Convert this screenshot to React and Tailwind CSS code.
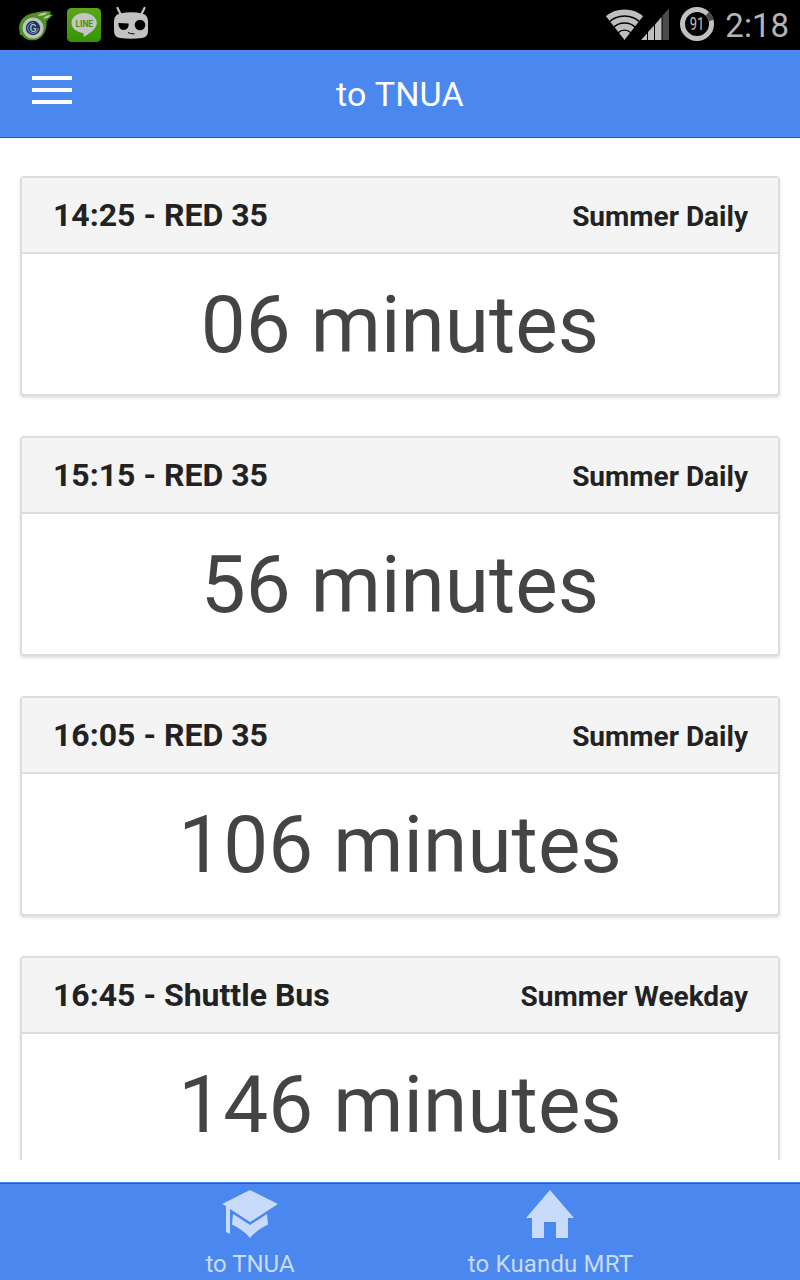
const departures = [
  { title: "14:25 - RED 35", schedule: "Summer Daily", wait: "06 minutes" },
  { title: "15:15 - RED 35", schedule: "Summer Daily", wait: "56 minutes" },
  { title: "16:05 - RED 35", schedule: "Summer Daily", wait: "106 minutes" },
  { title: "16:45 - Shuttle Bus", schedule: "Summer Weekday", wait: "146 minutes" },
];

function CometIcon() {
  return (
    <svg width="34" height="32" viewBox="0 0 34 32">
      <path d="M0 16C1 8 7 3 15 2C21 0 28 0 32 .500L31 3L34 4L29 8.500L27.500 10C28.500 19 24 27 17 29C10 30 5 28 3 24L1 24Z" fill="#4f8f25" />
      <path d="M18.500 4.500Q22 1.500 28.500 1.500Q25 5.500 18.500 4.500ZM24 7.500Q27 4 31.500 4Q29 8 24 7.500Z" fill="#c3c9bd" />
      <circle cx="14" cy="17" r="10.500" fill="#bfc4bf" />
      <circle cx="14" cy="17" r="7.200" fill="#17365a" />
      <circle cx="14" cy="17" r="5.300" fill="none" stroke="#aeb8be" strokeWidth=".8" strokeDasharray="25 8" />
      <text x="14" y="20.800" textAnchor="middle" fontSize="10.500" fontWeight="500" fill="#bcc4c8">G</text>
    </svg>
  );
}

function LineIcon() {
  return (
    <svg width="36" height="36" viewBox="0 0 36 36">
      <defs>
        <linearGradient id="line-green" x1="0" y1="0" x2="0" y2="1">
          <stop offset="0" stopColor="#5da51b" />
          <stop offset="1" stopColor="#329500" />
        </linearGradient>
      </defs>
      <rect x="1" y="1" width="34" height="34" rx="4.500" fill="url(#line-green)" />
      <path d="M18 6C10.500 6 5.500 10.500 5.500 16C5.500 21.500 10.500 25 17 26C18 26.500 17.500 28 17.500 30C23 27 30.800 22 30.800 16C30.800 10.500 25.500 6 18 6Z" fill="#c4c4c4" />
      <text x="18.200" y="19.600" textAnchor="middle" textLength="17.500" lengthAdjust="spacingAndGlyphs" fontSize="9.600" fontWeight="700" fill="#3d9609">LINE</text>
    </svg>
  );
}

function CidIcon() {
  return (
    <svg width="36" height="34" viewBox="0 0 36 34">
      <path d="M4.500 2L7.500 8M31.500 2L28.500 8" stroke="#c2c2c2" strokeWidth="2.200" strokeLinecap="round" />
      <path d="M7 7.500Q18 5 29 7.500Q35 9 35 15V25Q35 31 29 32Q18 33.500 7 32Q1 31 1 25V15Q1 9 7 7.500Z" fill="#c2c2c2" />
      <path d="M5.300 17L15.700 17.500Q16 24 10.500 24Q5.500 23.500 5.300 17Z" fill="#000" />
      <circle cx="27" cy="19" r="5.300" fill="#000" />
      <path d="M15 26.500L17.500 27.500L21.500 28" fill="none" stroke="#000" strokeWidth="1" />
    </svg>
  );
}

function StatusSignals() {
  return (
    <svg className="shrink-0" width="110" height="50" viewBox="0 0 110 50">
      <defs>
        <clipPath id="wifi-fan"><path d="M0 15L19.500 40L39 15V5H0Z" /></clipPath>
      </defs>
      <g clipPath="url(#wifi-fan)" fill="none" stroke="#bebebe" strokeWidth="5.600">
        <circle cx="19.500" cy="39" r="26.600" />
        <circle cx="19.500" cy="39" r="19.500" />
        <circle cx="19.500" cy="39" r="12.400" />
        <circle cx="19.500" cy="39" r="4.100" strokeWidth="8.200" />
      </g>
      <path d="M36 40L42 33.500V40ZM43 40V32L49 25.500V40ZM50 40V24.500L56.500 17V40Z" fill="#bebebe" />
      <path d="M57.500 40V15.500L64 8.500V40Z" fill="#4b4b4b" />
      <circle cx="92" cy="24" r="14.500" fill="none" stroke="#c1c1c1" strokeWidth="5" />
      <path d="M102.300 13.800A14.500 14.500 0 0 1 106.200 20.500" fill="none" stroke="#4b4b4b" strokeWidth="5" />
      <text x="92" y="30" textAnchor="middle" textLength="14.500" lengthAdjust="spacingAndGlyphs" fontSize="17.500" fill="#c1c1c1">91</text>
    </svg>
  );
}

function StatusBar() {
  return (
    <div className="flex h-[50px] shrink-0 items-center justify-between bg-black pr-[11px] pl-[19px]">
      <div className="flex h-full items-start pt-[7px]">
        <div className="mt-1"><CometIcon /></div>
        <div className="ml-[13px]"><LineIcon /></div>
        <div className="ml-[11px] -mt-px"><CidIcon /></div>
      </div>
      <div className="flex items-center">
        <StatusSignals />
        <span className="w-[74px] pt-px text-right text-[33px] leading-[50px] font-normal whitespace-nowrap text-[#b4b4b4]">2:18</span>
      </div>
    </div>
  );
}

function DepartureCard({ title, schedule, wait }) {
  return (
    <article className="h-[220px] shrink-0 overflow-hidden rounded-[4px] border-2 border-[#dddddd] bg-white shadow-[0_2px_3px_rgba(0,0,0,0.12)]">
      <div className="flex h-[76px] items-center justify-between border-b-2 border-[#dddddd] bg-[#f4f4f4] pr-[30px] pl-[31px] font-bold text-[#222222]">
        <h2 className="text-[32px] leading-[40px]">{title}</h2>
        <span className="pt-[3px] text-[28px] leading-[40px]">{schedule}</span>
      </div>
      <p className="pt-px text-center text-[80px] leading-[140px] tracking-[0.1px] text-[#444444]">{wait}</p>
    </article>
  );
}

export default function App() {
  return (
    <div className="flex h-[1280px] w-[800px] flex-col overflow-hidden bg-white font-['Roboto',sans-serif]">
      <StatusBar />
      <header className="grid h-[88px] shrink-0 grid-cols-[1fr_auto_1fr] border-b border-[#145fd7] bg-[#4a87ee]">
        <button aria-label="Menu" className="ml-8 flex w-10 flex-col gap-2 pt-[26px]">
          <span className="h-1 w-full bg-white" />
          <span className="h-1 w-full bg-white" />
          <span className="h-1 w-full bg-white" />
        </button>
        <h1 className="text-[34px] leading-[88px] tracking-[0.2px] text-white">to TNUA</h1>
      </header>
      <main className="flex h-[1022px] shrink-0 flex-col gap-10 overflow-hidden px-5 pt-[38px]">
        {departures.map((d) => <DepartureCard key={d.title} {...d} />)}
      </main>
      <nav className="mt-[22px] h-[98px] shrink-0 border-t border-[#4a87ee] bg-[#4a87ee]">
        <div className="flex h-full justify-center border-t border-[#145fd7] text-[24px] leading-[32px] text-[#c8dbfa]">
          <a className="flex w-[300px] flex-col items-center pt-[6px]">
            <svg width="56" height="48" viewBox="0 0 56 48" fill="currentColor">
              <path d="M28 0L56 14L28 32L8 19V44L4 42V16L0 14ZM11 24L28 35L45 24L46 34.500C39 38 33 42 28 48C23 42 17 38 10 34.500Z" />
            </svg>
            <span className="mt-[10px]">to TNUA</span>
          </a>
          <a className="flex w-[300px] flex-col items-center pt-[6px]">
            <svg width="48" height="48" viewBox="0 0 48 48" fill="currentColor">
              <path d="M24 0L48 28H42V48H30V32H18V48H6V28H0Z" />
            </svg>
            <span className="mt-[10px] pl-px tracking-[0.15px]">to Kuandu MRT</span>
          </a>
        </div>
      </nav>
    </div>
  );
}
